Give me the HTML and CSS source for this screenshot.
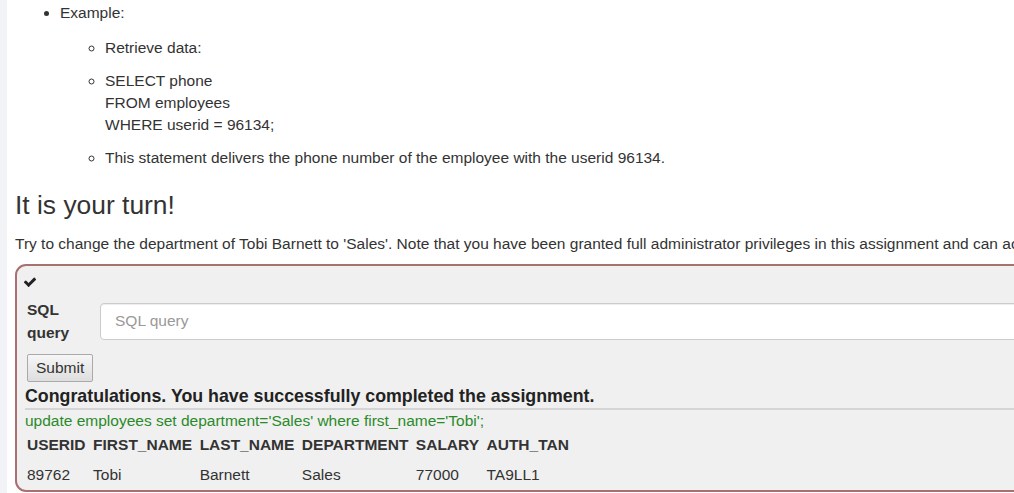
FILE: index.html
```html
<!DOCTYPE html>
<html>
<head>
<meta charset="utf-8">
<link rel="stylesheet" href="styles.css">
</head>
<body>
<div class="strip"></div>
<main class="content">
  <ul class="outer">
    <li>Example:
      <ul class="inner">
        <li><p>Retrieve data:</p></li>
        <li><p>SELECT phone<br>FROM employees<br>WHERE userid = 96134;</p></li>
        <li><p>This statement delivers the phone number of the employee with the userid 96134.</p></li>
      </ul>
    </li>
  </ul>
  <h3 class="title">It is your turn!</h3>
  <p class="intro">Try to change the department of Tobi Barnett to 'Sales'. Note that you have been granted full administrator privileges in this assignment and can access all data without authentication.</p>
  <div class="attack">
    <div class="check"><svg width="14" height="14" viewBox="0 0 1792 1792"><path d="M1671 566q0 40-28 68l-724 724-136 136q-28 28-68 28t-68-28l-136-136-362-362q-28-28-28-68t28-68l136-136q28-28 68-28t68 28l294 295 656-657q28-28 68-28t68 28l136 136q28 28 28 68z" fill="#222"/></svg></div>
    <form class="form">
      <label class="label">SQL<br>query</label>
      <input class="query" type="text" placeholder="SQL query">
    </form>
    <button class="submit" type="button">Submit</button>
    <div class="feedback">Congratulations. You have successfully completed the assignment.</div>
    <div class="output">
      <div class="sql">update employees set department='Sales' where first_name='Tobi';</div>
      <table class="result">
        <tr><th>USERID</th><th>FIRST_NAME</th><th>LAST_NAME</th><th>DEPARTMENT</th><th>SALARY</th><th>AUTH_TAN</th></tr>
        <tr><td>89762</td><td>Tobi</td><td>Barnett</td><td>Sales</td><td>77000</td><td>TA9LL1</td></tr>
      </table>
    </div>
  </div>
</main>
</body>
</html>
```
FILE: styles.css
```css
html, body {
  margin: 0;
  padding: 0;
  background: #fff;
  overflow: hidden;
}
body {
  display: flex;
  width: 1400px;
  font-family: "Liberation Sans", Arial, sans-serif;
  font-size: 15.5px;
  line-height: 22px;
  color: #333;
}
.strip {
  width: 7px;
  flex: none;
  background: #f2f3f6;
  min-height: 493px;
}
.content {
  flex: 1;
  padding-left: 8px;
}
.outer {
  margin: 2px 0 0;
  padding-left: 45px;
  list-style: disc;
}
.inner {
  margin: 13px 0 0;
  padding-left: 45px;
  list-style: circle;
}
.inner p {
  margin: 0 0 11px;
}
.title {
  margin: 22px 0 0;
  font-size: 26.4px;
  font-weight: 500;
  line-height: 29px;
}
.intro {
  margin: 13px 0 0;
}
.attack {
  margin-top: 9px;
  width: 1200px;
  border: 2px solid #a97070;
  border-radius: 11px;
  background: #f0f0f0;
  padding: 4px 0 2px 8px;
}
.check {
  height: 22px;
  padding-top: 5px;
  box-sizing: border-box;
}
.check svg {
  display: block;
  margin-left: -2px;
}
.form {
  display: flex;
  align-items: center;
  margin-top: 6px;
}
.label {
  width: 73px;
  font-weight: bold;
  line-height: 23px;
  padding-left: 2px;
}
.query {
  flex: 1;
  height: 37px;
  box-sizing: border-box;
  border: 1px solid #ccc;
  border-radius: 4px;
  padding: 6px 14px;
  font: inherit;
  color: #555;
  background: #fff;
  box-shadow: inset 0 1px 1px rgba(0,0,0,.075);
}
.query::placeholder {
  color: #999;
}
.submit {
  display: block;
  margin: 10px 0 0 2px;
  height: 28px;
  padding: 1px 8px;
  font: inherit;
  color: #333;
  background: linear-gradient(#f6f6f6, #dedede);
  border: 1px solid #aaa;
  border-radius: 2px;
}
.feedback {
  margin-top: 2px;
  font-weight: bold;
  font-size: 17.8px;
  line-height: 24px;
  color: #222;
}
.output {
  border-top: 2px solid #d5d5d5;
  margin-top: 0;
}
.sql {
  color: #2a8a2a;
  padding-top: 0;
}
.result {
  border-collapse: collapse;
  margin-top: 0;
}
.result th {
  text-align: left;
  font-weight: bold;
  padding: 2px 5.5px 6px 2px;
  line-height: 22px;
}
.result td {
  padding: 2px 5.5px 2px 2px;
  line-height: 22px;
}
```
